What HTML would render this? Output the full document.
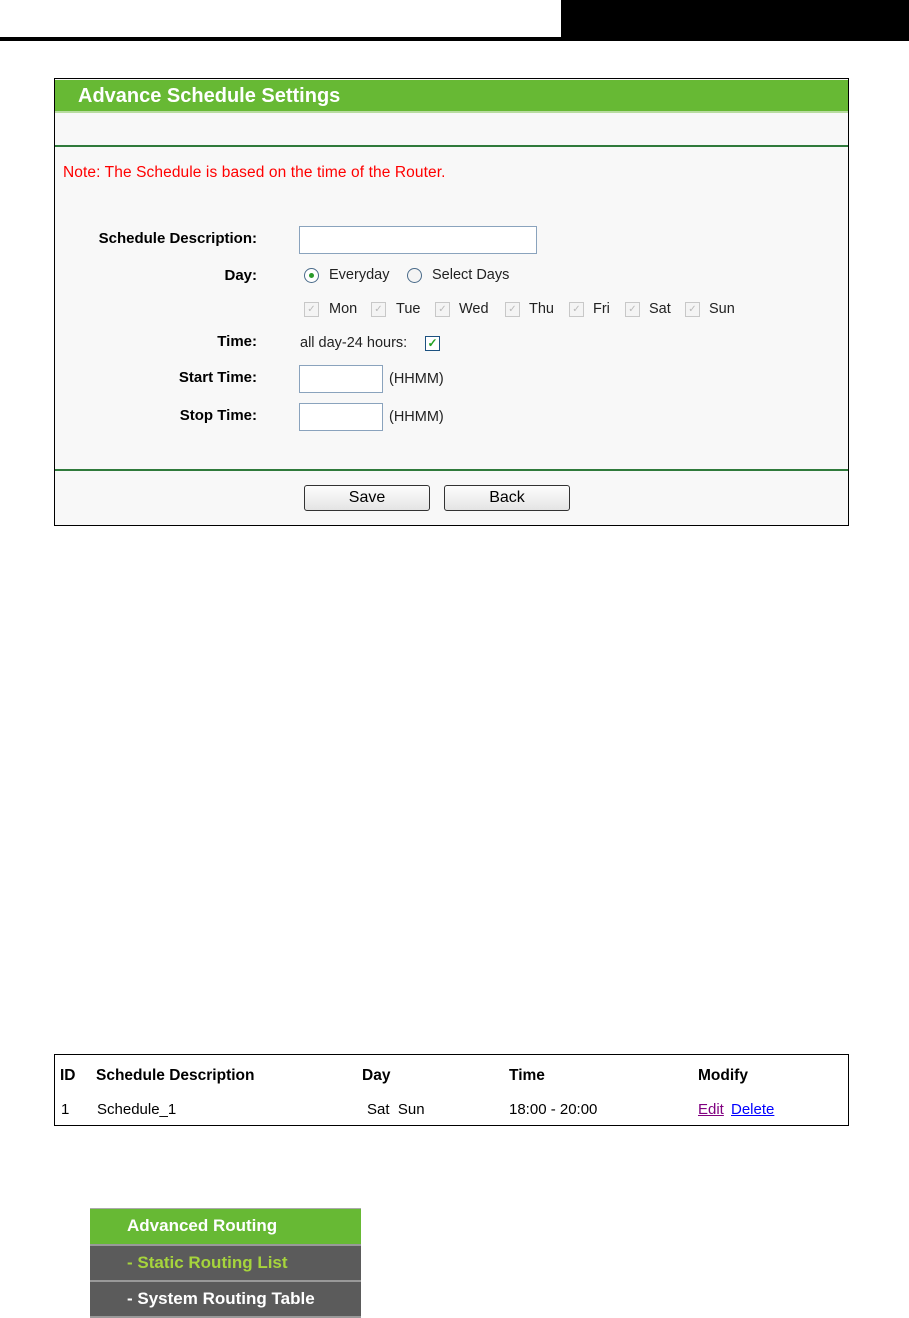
<!DOCTYPE html>
<html><head><style>
body{margin:0;width:909px;height:1317px;background:#fff;position:relative;font-family:"Liberation Sans",Arial,sans-serif;font-size:14px;overflow:hidden}
.a{position:absolute}
.lbl{position:absolute;font-weight:bold;font-size:15px;color:#000;right:652px;text-align:right}
.txt{position:absolute;font-size:14.5px;color:#222}
.inp{position:absolute;border:1px solid #8aa3bd;background:#fff;height:26px}
.cb{position:absolute;width:13px;height:13px;border:1px solid #c8c8c8;background:#f4f4f4;color:#bbb;font-size:10px;line-height:13px;text-align:center}
.btn{position:absolute;width:124px;height:24px;border:1px solid #333;border-radius:3px;background:linear-gradient(#fdfdfd,#e4e4e4);font-size:16px;text-align:center;line-height:24px}
.th{position:absolute;font-weight:bold;font-size:15.5px;top:1067px}
</style></head><body>
<div class="a" style="left:561px;top:0;width:348px;height:40px;background:#000"></div>
<div class="a" style="left:0;top:37px;width:909px;height:4px;background:#000"></div>

<div class="a" style="left:54px;top:78px;width:793px;height:446px;border:1px solid #000;background:#f8f8f8"></div>
<div class="a" style="left:55px;top:80px;width:793px;height:31px;background:#67b934;border-bottom:2px solid #b8dca0"></div>
<div class="a" style="left:78px;top:85px;color:#fff;font-size:20px;font-weight:bold">Advance Schedule Settings</div>
<div class="a" style="left:55px;top:145px;width:793px;height:2px;background:#2f7a3b"></div>
<div class="a" style="left:63px;top:164px;color:#f00;font-size:15.5px;letter-spacing:0.1px">Note: The Schedule is based on the time of the Router.</div>

<div class="lbl" style="top:230px">Schedule Description:</div>
<div class="inp" style="left:299px;top:226px;width:236px"></div>
<div class="lbl" style="top:267px">Day:</div>
<div class="a" style="left:304px;top:268px;width:13px;height:13px;border:1px solid #4a6b8a;border-radius:50%;background:#fff"><div class="a" style="left:4px;top:4px;width:5px;height:5px;border-radius:50%;background:#2a9a2a"></div></div>
<div class="txt" style="left:329px;top:267px">Everyday</div>
<div class="a" style="left:407px;top:268px;width:13px;height:13px;border:1px solid #4a6b8a;border-radius:50%;background:#f4f4f4"></div>
<div class="txt" style="left:432px;top:267px">Select Days</div>

<div class="cb" style="left:304px;top:302px">✓</div><div class="txt" style="left:329px;top:301px">Mon</div>
<div class="cb" style="left:371px;top:302px">✓</div><div class="txt" style="left:396px;top:301px">Tue</div>
<div class="cb" style="left:435px;top:302px">✓</div><div class="txt" style="left:459px;top:301px">Wed</div>
<div class="cb" style="left:505px;top:302px">✓</div><div class="txt" style="left:529px;top:301px">Thu</div>
<div class="cb" style="left:569px;top:302px">✓</div><div class="txt" style="left:593px;top:301px">Fri</div>
<div class="cb" style="left:625px;top:302px">✓</div><div class="txt" style="left:649px;top:301px">Sat</div>
<div class="cb" style="left:685px;top:302px">✓</div><div class="txt" style="left:709px;top:301px">Sun</div>

<div class="lbl" style="top:333px">Time:</div>
<div class="txt" style="left:300px;top:335px">all day-24 hours:</div>
<div class="cb" style="left:425px;top:336px;border-color:#1c5180;background:#fff;color:#21a121;font-weight:bold;font-size:12px">✓</div>
<div class="lbl" style="top:369px">Start Time:</div>
<div class="inp" style="left:299px;top:365px;width:82px"></div>
<div class="txt" style="left:389px;top:371px">(HHMM)</div>
<div class="lbl" style="top:407px">Stop Time:</div>
<div class="inp" style="left:299px;top:403px;width:82px"></div>
<div class="txt" style="left:389px;top:409px">(HHMM)</div>

<div class="a" style="left:55px;top:469px;width:793px;height:2px;background:#2f7a3b"></div>
<div class="btn" style="left:304px;top:485px">Save</div>
<div class="btn" style="left:444px;top:485px">Back</div>

<div class="a" style="left:54px;top:1054px;width:793px;height:70px;border:1px solid #000;background:#fff"></div>
<div class="th" style="left:60px">ID</div>
<div class="th" style="left:96px">Schedule Description</div>
<div class="th" style="left:362px">Day</div>
<div class="th" style="left:509px">Time</div>
<div class="th" style="left:698px">Modify</div>
<div class="txt" style="left:61px;top:1101px;color:#000;font-size:15px">1</div>
<div class="txt" style="left:97px;top:1101px;color:#000;font-size:15px">Schedule_1</div>
<div class="txt" style="left:367px;top:1101px;color:#000;font-size:15px">Sat&nbsp; Sun</div>
<div class="txt" style="left:509px;top:1101px;color:#000;font-size:15px">18:00 - 20:00</div>
<div class="txt" style="left:698px;top:1101px;color:#800080;text-decoration:underline;font-size:15px">Edit</div>
<div class="txt" style="left:731px;top:1101px;color:#00f;text-decoration:underline;font-size:15px">Delete</div>

<div class="a" style="left:90px;top:1208px;width:271px;height:35px;background:#67b934;border-top:1px solid #aaa"></div>
<div class="a" style="left:127px;top:1216px;color:#fff;font-weight:bold;font-size:17px">Advanced Routing</div>
<div class="a" style="left:90px;top:1244px;width:271px;height:34px;background:#5b5b5b;border-top:2px solid #999"></div>
<div class="a" style="left:127px;top:1253px;color:#a6d43c;font-weight:bold;font-size:17px">- Static Routing List</div>
<div class="a" style="left:90px;top:1280px;width:271px;height:34px;background:#5b5b5b;border-top:2px solid #999;border-bottom:2px solid #999"></div>
<div class="a" style="left:127px;top:1289px;color:#fff;font-weight:bold;font-size:17px">- System Routing Table</div>
</body></html>
